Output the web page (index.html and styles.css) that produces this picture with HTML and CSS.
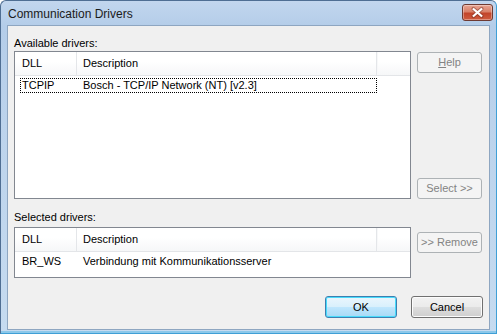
FILE: index.html
```html
<!DOCTYPE html>
<html>
<head>
<meta charset="utf-8">
<link rel="stylesheet" href="styles.css">
</head>
<body>
<div class="window">
  <div class="titlebar">
    <span class="title">Communication Drivers</span>
    <span class="close">
      <svg width="31" height="17" viewBox="0 0 31 17">
        <path d="M11 4.5 L20 12.5 M20 4.5 L11 12.5" stroke="#6b2a20" stroke-width="4" stroke-linecap="round" opacity="0.45"/>
        <path d="M11.5 5 L19.5 12 M19.5 5 L11.5 12" stroke="#ffffff" stroke-width="2.4" stroke-linecap="square"/>
      </svg>
    </span>
  </div>
  <div class="client">
    <div class="label">Available drivers:</div>
    <div class="grid">
      <div class="list list-avail">
        <div class="lhead">
          <div class="c1">DLL</div>
          <div class="c2">Description</div>
          <div class="c3"></div>
        </div>
        <div class="lrow focus">
          <div class="c1">TCPIP</div>
          <div class="c2">Bosch - TCP/IP Network (NT) [v2.3]</div>
        </div>
      </div>
      <div class="btncol spread">
        <button class="btn disabled"><u>H</u>elp</button>
        <button class="btn disabled">Select &gt;&gt;</button>
      </div>
    </div>
    <div class="label label2">Selected drivers:</div>
    <div class="grid">
      <div class="list list-sel">
        <div class="lhead">
          <div class="c1">DLL</div>
          <div class="c2">Description</div>
          <div class="c3"></div>
        </div>
        <div class="lrow plain">
          <div class="c1">BR_WS</div>
          <div class="c2">Verbindung mit Kommunikationsserver</div>
        </div>
      </div>
      <div class="btncol top">
        <button class="btn disabled">&gt;&gt; Remove</button>
      </div>
    </div>
    <div class="footer">
      <button class="btn default">OK</button>
      <button class="btn normal">Cancel</button>
    </div>
  </div>
</div>
</body>
</html>
```
FILE: styles.css
```css
* { box-sizing: border-box; }
html, body { margin: 0; padding: 0; }
body {
  width: 497px;
  height: 334px;
  overflow: hidden;
  font-family: "Liberation Sans", Arial, sans-serif;
  font-size: 11px;
  color: #000;
  background: #fff;
}
.window {
  width: 497px;
  height: 334px;
  display: flex;
  flex-direction: column;
  border: 1px solid #4f6e93;
  border-right-color: #3f9fd6;
  border-bottom-color: #3f9fd6;
  border-radius: 6px 6px 0 0;
  background: linear-gradient(to bottom, #c2d6ee 0px, #b4cde9 25px, #bcd3ec 120px, #c6dbf0 334px);
  padding: 0 6px 0 6px;
  box-shadow: inset 0 -2px 0 #8cc8ea;
}
.titlebar {
  height: 24px;
  flex: none;
  display: flex;
  align-items: center;
  justify-content: space-between;
  position: relative;
}
.title {
  font-family: "Liberation Sans", Arial, sans-serif;
  font-size: 12px;
  color: #1b1b1b;
  padding-left: 1px;
  padding-top: 1px;
}
.close {
  width: 31px;
  height: 17px;
  margin-right: -3px;
  margin-top: -2px;
  border: 1px solid #6e3a32;
  border-radius: 3px;
  background: linear-gradient(to bottom, #e8a493 0%, #d98169 45%, #c2442a 55%, #cf5c3f 100%);
  display: flex;
  align-items: center;
  justify-content: center;
  box-shadow: inset 0 0 0 1px rgba(255,255,255,0.35);
}
.close svg { display: block; }
.client {
  flex: 1;
  background: #f0f0f0;
  border: 1px solid #8ea6c1;
  margin-bottom: 3px;
  padding: 11px 7px 11px 6px;
  display: flex;
  flex-direction: column;
}
.label {
  height: 13px;
  line-height: 13px;
  margin-bottom: 1px;
  color: #000;
}
.label2 {
  margin-top: 12px;
  margin-bottom: 3px;
}
.grid {
  display: grid;
  grid-template-columns: 397px 65px;
  column-gap: 6px;
}
.list {
  background: #fff;
  border: 1px solid #828790;
}
.list-avail { height: 148px; }
.list-sel { height: 51px; }
.lhead {
  height: 24px;
  display: flex;
  background: linear-gradient(to bottom, #ffffff 0%, #ffffff 40%, #f6f7f8 100%);
  border-bottom: 1px solid #e3e5e8;
}
.lhead > div {
  line-height: 23px;
  padding-left: 6px;
  white-space: nowrap;
}
.lhead .c1 { width: 62px; padding-left: 7px; border-right: 1px solid #e4e6e9; }
.lhead .c2 { width: 300px; border-right: 1px solid #e4e6e9; box-shadow: 1px 0 0 #f7f8f9; }
.lhead .c3 { flex: 1; }
.lrow {
  display: flex;
  white-space: nowrap;
}
.lrow.focus {
  margin: 2px 0 0 5px;
  width: 357px;
  height: 15px;
  border: 1px dotted #000;
  line-height: 13px;
}
.lrow.focus .c1 { width: 56px; padding-left: 1px; }
.lrow.focus .c2 { padding-left: 6px; }
.lrow.plain {
  height: 19px;
  line-height: 19px;
}
.lrow.plain .c1 { width: 62px; padding-left: 7px; }
.lrow.plain .c2 { padding-left: 6px; }
.btncol {
  display: flex;
  flex-direction: column;
}
.btncol.spread { justify-content: space-between; padding-top: 1px; }
.btncol.top { padding-top: 5px; }
.btn {
  font-family: "Liberation Sans", Arial, sans-serif;
  font-size: 11px;
  height: 21px;
  width: 65px;
  padding: 0;
  border-radius: 3px;
  text-align: center;
  line-height: 19px;
}
.btn u { text-decoration: underline; }
.btn.disabled {
  border: 1px solid #adb2b5;
  background: #f4f4f4;
  color: #838383;
}
.btn.normal {
  border: 1px solid #707070;
  background: linear-gradient(to bottom, #f2f2f2 0%, #ebebeb 48%, #dddddd 52%, #cfcfcf 100%);
  box-shadow: inset 0 0 0 1px #fcfcfc;
  color: #000;
}
.btn.default {
  border: 1px solid #3c7fb1;
  background: linear-gradient(to bottom, #eaf6fd 0%, #d9f0fc 48%, #bee6fd 52%, #a7d9f5 100%);
  box-shadow: inset 0 0 0 1px #48dbfb;
  color: #000;
}
.footer {
  margin-top: auto;
  display: flex;
  justify-content: flex-end;
  gap: 14px;
  margin-right: -1px;
}
.footer .btn { width: 72px; height: 22px; line-height: 20px; }
```
